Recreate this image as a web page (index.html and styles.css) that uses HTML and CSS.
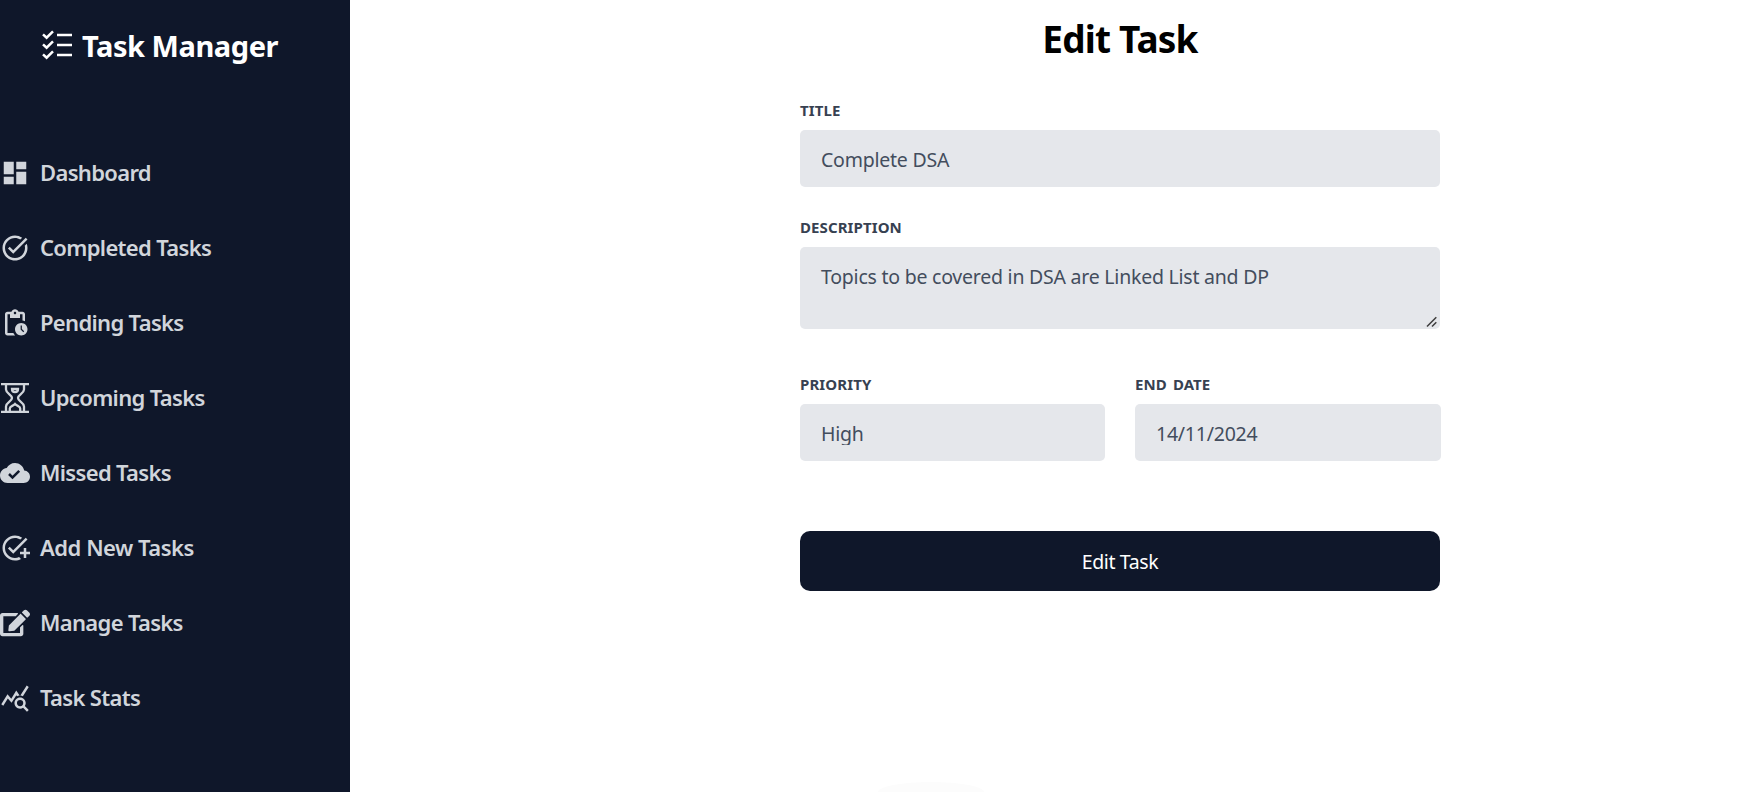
FILE: index.html
```html
<!DOCTYPE html>
<html lang="en">
<head>
<meta charset="utf-8">
<title>Task Manager</title>
<link rel="stylesheet" href="styles.css">
</head>
<body>
<div class="app">
  <aside class="sidebar">
    <div class="brand">
      <svg class="icon icon-brand" viewBox="0 0 30 30"><path class="line" d="M1 4.3l3.6 3.4L11 1.4M1 14.3l3.6 3.4 6.4-6.3M1 24.3l3.6 3.4 6.4-6.3M15 5h15M15 15h15M15 25h15"/></svg>
      <span class="brand-name">Task Manager</span>
    </div>
    <nav class="nav">
      <a class="nav-item"><svg class="icon" viewBox="0 0 24 24"><path d="M3 13h8V3H3v10zm0 8h8v-6H3v6zm10 0h8V11h-8v10zm0-18v6h8V3h-8z"/></svg><span class="nav-text">Dashboard</span></a>
      <a class="nav-item"><svg class="icon" viewBox="0 0 24 24"><path d="M22 5.18 10.59 16.6l-4.24-4.24 1.41-1.41 2.83 2.83 10-10L22 5.18zm-2.21 5.04c.13.57.21 1.17.21 1.78 0 4.42-3.58 8-8 8s-8-3.58-8-8 3.58-8 8-8c1.58 0 3.04.46 4.28 1.25l1.44-1.44A9.9 9.9 0 0 0 12 2C6.48 2 2 6.48 2 12s4.48 10 10 10 10-4.48 10-10c0-1.19-.22-2.33-.6-3.39l-1.61 1.61z"/></svg><span class="nav-text">Completed Tasks</span></a>
      <a class="nav-item"><svg class="icon" viewBox="0 0 24 24"><path d="M17 12c-2.76 0-5 2.24-5 5s2.24 5 5 5 5-2.24 5-5-2.24-5-5-5zm1.65 7.35L16.5 17.2V14h1v2.79l1.85 1.85-.7.71zM18 3h-3.18C14.4 1.84 13.3 1 12 1s-2.4.84-2.82 2H6c-1.1 0-2 .9-2 2v15c0 1.1.9 2 2 2h6.11a6.743 6.743 0 0 1-1.42-2H6V5h2v3h8V5h2v5.08c.71.1 1.38.31 2 .6V5c0-1.1-.9-2-2-2zm-6 2c-.55 0-1-.45-1-1s.45-1 1-1 1 .45 1 1-.45 1-1 1z"/></svg><span class="nav-text">Pending Tasks</span></a>
      <a class="nav-item"><svg class="icon" viewBox="0 0 30 30"><path class="line" d="M1 1.2h28M1 28.8h28M6 2v4.5c0 4 6 5 6 8.5s-6 4.5-6 8.5V28M24 2v4.5c0 4-6 5-6 8.5s6 4.5 6 8.5V28M9.800 28v-2.500c0-2.500 3.200-2.300 5.200-4.500 2 2.200 5.200 2 5.200 4.500V28M12 6h6c0 2-1.500 3.200-3 3.200S12 8 12 6z"/></svg><span class="nav-text">Upcoming Tasks</span></a>
      <a class="nav-item"><svg class="icon" viewBox="0 0 24 24"><path d="M19.35 10.04C18.67 6.59 15.64 4 12 4 9.11 4 6.6 5.64 5.35 8.04 2.34 8.36 0 10.91 0 14c0 3.31 2.69 6 6 6h13c2.76 0 5-2.24 5-5 0-2.64-2.05-4.78-4.65-4.96zM10 17l-3.5-3.5 1.41-1.41L10 14.17l4.68-4.67 1.41 1.41L10 17z"/></svg><span class="nav-text">Missed Tasks</span></a>
      <a class="nav-item"><svg class="icon" viewBox="0 0 24 24"><path d="M22 5.18 10.59 16.6l-4.24-4.24 1.41-1.41 2.83 2.83 10-10L22 5.18zM12 20c-4.41 0-8-3.59-8-8s3.59-8 8-8c1.57 0 3.04.46 4.28 1.25l1.45-1.45A10.02 10.02 0 0 0 12 2C6.48 2 2 6.48 2 12s4.48 10 10 10c1.73 0 3.36-.44 4.78-1.22l-1.5-1.5c-1 .46-2.11.72-3.28.72zm7-5h-3v2h3v3h2v-3h3v-2h-3v-3h-2v3z"/></svg><span class="nav-text nav-text-wide">Add New Tasks</span></a>
      <a class="nav-item"><svg class="icon" viewBox="0 0 576 512"><path d="M402.600 83.200l90.200 90.200c3.800 3.800 3.800 10 0 13.800L274.400 405.600l-92.800 10.300c-12.400 1.400-22.900-9.100-21.500-21.500l10.300-92.800L388.800 83.200c3.800-3.800 10-3.800 13.800 0zm162-22.900l-48.800-48.800c-15.200-15.200-39.900-15.200-55.200 0l-35.400 35.400c-3.800 3.800-3.800 10 0 13.800l90.200 90.200c3.800 3.800 10 3.800 13.800 0l35.400-35.400c15.200-15.300 15.200-40 0-55.200zM384 346.200V448H64V128h229.800c3.200 0 6.200-1.300 8.500-3.500l40-40c7.600-7.600 2.200-20.500-8.500-20.500H48C21.500 64 0 85.500 0 112v352c0 26.500 21.500 48 48 48h352c26.500 0 48-21.500 48-48V306.200c0-10.700-12.900-16-20.500-8.500l-40 40c-2.200 2.300-3.500 5.300-3.500 8.500z"/></svg><span class="nav-text">Manage Tasks</span></a>
      <a class="nav-item"><svg class="icon" viewBox="0 0 24 24"><path d="M19.880 18.470c.44-.7.7-1.510.7-2.390 0-2.490-2.010-4.500-4.500-4.500s-4.500 2.010-4.500 4.500 2.010 4.500 4.490 4.500c.88 0 1.700-.26 2.390-.7L21.580 23 23 21.580l-3.120-3.110zm-3.800.11a2.500 2.500 0 0 1 0-5 2.500 2.500 0 0 1 0 5zm-.36-8.500c-.74.02-1.450.18-2.100.45l-.55-.83-3.800 6.180-3.010-3.520-3.630 5.810L1 17l5-8 3 3.500L13 6l2.720 4.080zm2.590.5c-.64-.28-1.330-.45-2.050-.49L21.380 2 23 3.180l-4.690 7.400z"/></svg><span class="nav-text">Task Stats</span></a>
    </nav>
  </aside>
  <main class="main">
    <form class="form">
      <h1 class="title">Edit Task</h1>
      <div class="group">
        <label class="label" for="title">TITLE</label>
        <input class="field" id="title" type="text" value="Complete DSA">
      </div>
      <div class="group group-description">
        <label class="label" for="description">DESCRIPTION</label>
        <div class="area">
          <textarea class="field field-area" id="description">Topics to be covered in DSA are Linked List and DP</textarea>
          <svg class="grip" viewBox="0 0 12 12"><path d="M1 10.500L10.300 1.200M6 10.500l4.300-4.300"/></svg>
        </div>
      </div>
      <div class="row">
        <div class="group">
          <span class="label">PRIORITY</span>
          <div class="field"><div class="field-value">High</div></div>
        </div>
        <div class="group">
          <label class="label" for="end-date">END DATE</label>
          <input class="field field-date" id="end-date" type="text" value="14/11/2024">
        </div>
      </div>
      <button class="submit" type="button">Edit Task</button>
    </form>
  </main>
  <div class="glow"></div>
</div>
</body>
</html>
```
FILE: styles.css
```css
* { box-sizing: border-box; }

body {
  margin: 0;
  background: #fff;
  font-family: "Noto Sans", "Open Sans", sans-serif;
}

.app {
  position: relative;
  display: flex;
  height: 792px;
  overflow: hidden;
}

/* Sidebar */
.sidebar {
  flex: none;
  width: 350px;
  background: #0f172a;
  color: #d1d5db;
}

.icon {
  flex: none;
  width: 30px;
  height: 30px;
  fill: currentColor;
}

.line {
  fill: none;
  stroke: currentColor;
  stroke-width: 2.3;
}

.icon-brand .line { stroke-width: 2.5; }

.brand {
  display: flex;
  gap: 10px;
  height: 158px;
  padding: 30px 0 0 42px;
  color: #fff;
}

.brand-name {
  height: 40px;
  padding-top: 1px;
  font-size: 29px;
  font-weight: 700;
  line-height: 30px;
  letter-spacing: -0.45px;
  white-space: nowrap;
}

.nav {
  display: flex;
  flex-direction: column;
  gap: 45px;
}

.nav-item {
  display: flex;
  gap: 10px;
  height: 30px;
  font-size: 22px;
  font-weight: 600;
  letter-spacing: -0.67px;
  white-space: nowrap;
}

.nav-text { line-height: 28px; }

.nav-text-wide { letter-spacing: -0.48px; }

/* Form */
.main {
  display: flex;
  flex: 1;
  justify-content: center;
  padding-left: 136px;
}

.form { width: 640px; }

.title {
  height: 100px;
  margin: 0;
  padding-top: 14px;
  color: #000;
  font-size: 37px;
  font-weight: 700;
  line-height: 50px;
  letter-spacing: -0.85px;
  text-align: center;
}

.group {
  display: flex;
  flex-direction: column;
  gap: 10px;
  margin-bottom: 30px;
}

.label {
  height: 20px;
  color: #374151;
  font-size: 15px;
  font-weight: 680;
  line-height: 20px;
  letter-spacing: 0.1px;
  word-spacing: 2px;
}

.field {
  display: block;
  width: 100%;
  height: 57px;
  padding: 16px 21px 14px;
  border: 0;
  border-radius: 5px;
  outline: 0;
  background: #e5e7eb;
  color: #434d5d;
  font-family: inherit;
  font-size: 19.5px;
  line-height: 27px;
  letter-spacing: -0.23px;
}

.area { position: relative; }

.field-area {
  height: 82px;
  overflow: hidden;
  resize: none;
}

.grip {
  position: absolute;
  right: 2px;
  bottom: 1px;
  width: 12px;
  height: 12px;
  fill: none;
  stroke: #404040;
  stroke-width: 1.6;
}

.field-value {
  height: 25px;
  overflow: hidden;
}

.group-description { margin-bottom: 45px; }

.row {
  display: grid;
  grid-template-columns: 305px 306px;
  gap: 30px;
  margin-bottom: 40px;
}

.submit {
  width: 100%;
  height: 60px;
  padding: 0;
  border: 0;
  border-radius: 10px;
  background: #0f172a;
  color: #fff;
  font-family: inherit;
  font-size: 19.5px;
  letter-spacing: -0.4px;
}

/* Soft shade rising over the bottom edge of the page */
.glow {
  position: absolute;
  bottom: -10px;
  left: 878px;
  width: 106px;
  height: 20px;
  border-radius: 50%;
  background: #fcfcfc;
}
```
